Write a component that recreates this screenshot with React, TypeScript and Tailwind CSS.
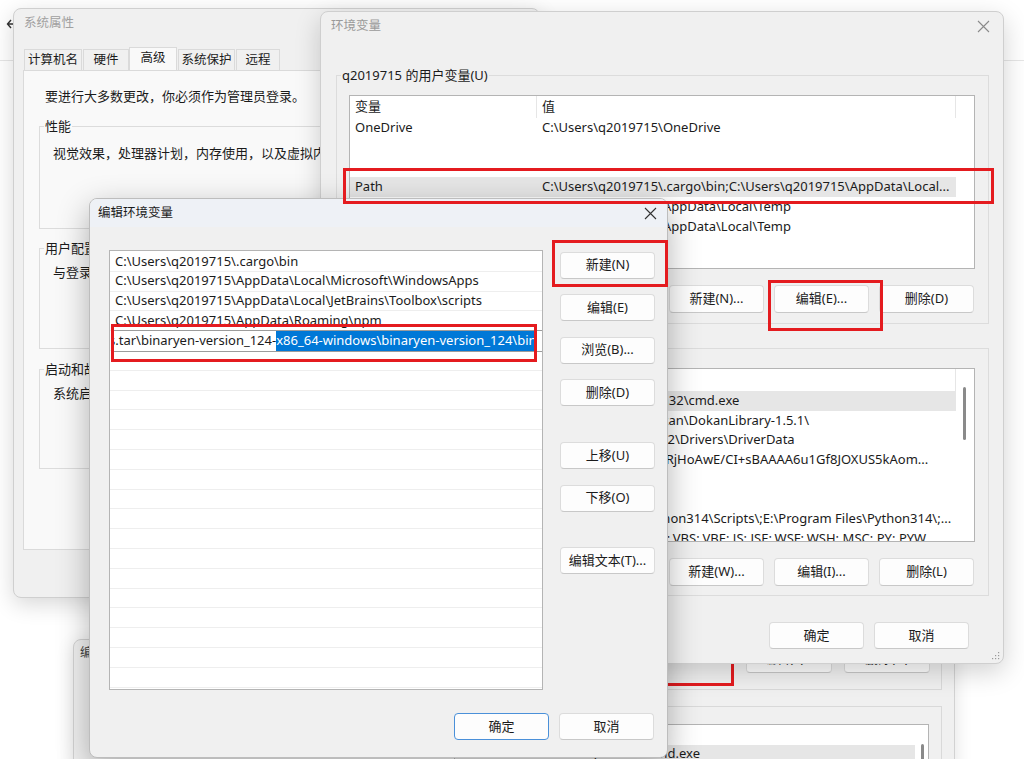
import React from 'react'

type BtnProps = {
  label: string
  className?: string
  focused?: boolean
}

function Btn({ label, className = '', focused = false }: BtnProps) {
  return (
    <div
      className={`flex w-[95px] shrink-0 items-center justify-center rounded-[4px] border bg-[#fdfdfd] text-[13px] text-[#1b1b1b] ${
        focused ? 'border-[#4a90d9]' : 'border-[#dcdcdc] border-b-[#c8c8c8]'
      } ${className}`}
    >
      {label}
    </div>
  )
}

function Group({ label, bg, className = '', children }: { label: string; bg: string; className?: string; children?: React.ReactNode }) {
  return (
    <div className={`relative border border-[#dcdcdc] ${className}`}>
      <span className={`absolute left-[4px] top-[-10px] px-[1px] leading-[18px] ${bg}`}>{label}</span>
      {children}
    </div>
  )
}

function CloseX({ color }: { color: string }) {
  return (
    <svg width="13" height="13" viewBox="0 0 13 13" className={color}>
      <path d="M1 1 L12 12 M12 1 L1 12" stroke="currentColor" strokeWidth="1.1" fill="none" />
    </svg>
  )
}

function RedBox({ className }: { className: string }) {
  return <div className={`absolute border-[3px] border-[#e41b1f] ${className}`} />
}

const userVars: [string, string, boolean?][] = [
  ['OneDrive', 'C:\\Users\\q2019715\\OneDrive'],
  ['', ''],
  ['', ''],
  ['Path', 'C:\\Users\\q2019715\\.cargo\\bin;C:\\Users\\q2019715\\AppData\\Local...', true],
  ['TEMP', 'C:\\Users\\q2019715\\AppData\\Local\\Temp'],
  ['TMP', 'C:\\Users\\q2019715\\AppData\\Local\\Temp'],
]

const sysVars: [string, string, boolean?][] = [
  ['ComSpec', 'C:\\WINDOWS\\system32\\cmd.exe', true],
  ['DokanLibrary1', 'C:\\Program Files\\Dokan\\DokanLibrary-1.5.1\\'],
  ['DriverData', 'C:\\Windows\\System32\\Drivers\\DriverData'],
  ['EFC_4416', 'AQAAANCMnd8BFdERjHoAwE/CI+sBAAAA6u1Gf8JOXUS5kAom...'],
  ['NUMBER_OF_PROCESSORS', '16'],
  ['OS', 'Windows_NT'],
  ['Path', 'E:\\Program Files\\Python314\\Scripts\\;E:\\Program Files\\Python314\\;...'],
  ['PATHEXT', '.COM;.EXE;.BAT;.CMD;.VBS;.VBE;.JS;.JSE;.WSF;.WSH;.MSC;.PY;.PYW'],
]

const pathItems = [
  'C:\\Users\\q2019715\\.cargo\\bin',
  'C:\\Users\\q2019715\\AppData\\Local\\Microsoft\\WindowsApps',
  'C:\\Users\\q2019715\\AppData\\Local\\JetBrains\\Toolbox\\scripts',
  'C:\\Users\\q2019715\\AppData\\Roaming\\npm',
]

function VarList({ rows, scroll, shifted }: { rows: [string, string, boolean?][]; scroll?: boolean; shifted?: boolean }) {
  return (
    <div className="relative h-[174px] overflow-hidden border border-[#b4b4b4] bg-white">
      <div className="flex h-[22px] items-center">
        <div className="flex h-full w-[187px] items-center border-r border-[#e6e6e6] pl-[5px]">变量</div>
        <div className="flex h-full w-[419px] items-center border-r border-[#e6e6e6] pl-[5px]">值</div>
      </div>
      {rows.map(([name, value, sel], i) => (
        <div key={i} className={`flex h-[19.7px] w-[606px] items-center whitespace-nowrap ${sel ? 'bg-[#e6e6e6]' : ''}`}>
          <div className="w-[187px] overflow-hidden pl-[5px]">{name}</div>
          <div className="w-[419px] overflow-hidden pl-[5px]">
            <span className={shifted ? 'ml-[-3px]' : ''}>{value}</span>
          </div>
        </div>
      ))}
      {scroll && <div className="absolute right-[8px] top-[18px] h-[53px] w-[3px] rounded-full bg-[#8a8a8a]" />}
    </div>
  )
}

export default function App() {
  return (
    <div className="relative h-[759px] w-[1024px] overflow-hidden bg-white font-['Noto_Sans','Noto_Sans_CJK_SC',sans-serif] text-[13px] text-[#1b1b1b]">
      {/* settings window behind everything */}
      <div className="absolute left-0 top-[60px] h-px w-full bg-[#e6e6e6]" />
      <svg className="absolute left-[6px] top-[18px]" width="10" height="12" viewBox="0 0 10 12">
        <path d="M8 6 H2 M5 2 L1.5 6 L5 10" stroke="#333" strokeWidth="1.4" fill="none" />
      </svg>

      {/* older dialog peeking out at the bottom */}
      <div className="absolute left-[73px] top-[639px] h-[140px] w-[882px] rounded-tl-[8px] border border-[#d2d2d2] bg-[#f0f0f0] shadow-[0_4px_18px_rgba(0,0,0,0.12)]">
        <div className="pl-[6px] pt-[4px] text-[12.5px] text-[#444]">编辑环境变量</div>
        <div className="absolute left-[487px] top-[-30px] h-[80px] w-[381px] border border-[#d9d9d9]" />
        <div className="absolute left-[487px] top-[66px] h-[100px] w-[381px] border border-[#d9d9d9]" />
        <Btn label="编辑(E)..." className="absolute left-[672px] top-[5px] h-[28px] !w-[86px]" />
        <Btn label="删除(D)" className="absolute left-[770px] top-[5px] h-[28px] !w-[86px]" />
        <div className="absolute left-[487px] top-[10px] h-[36px] w-[173px] border-[3px] border-[#e41b1f]" />
        <div className="absolute left-[380px] top-[84px] h-[60px] w-[475px] overflow-hidden border border-[#b4b4b4] bg-white">
          <div className="absolute left-0 top-[20px] h-[20px] w-[460px] bg-[#e6e6e6]" />
          <span className="absolute right-[228px] top-[19px] whitespace-nowrap">C:\WINDOWS\system32\cmd.exe</span>
          <div className="absolute left-[466px] top-[19px] h-[40px] w-[3px] rounded-full bg-[#8a8a8a]" />
        </div>
      </div>

      {/* 系统属性 */}
      <div className="absolute left-[13px] top-[8px] h-[590px] w-[527px] rounded-[8px] border border-[#cfcfcf] bg-[#f0f0f0] shadow-[0_6px_22px_rgba(0,0,0,0.16)]">
        <div className="flex h-[28px] items-center pl-[10px] text-[12.5px] text-[#a0a0a0]">系统属性</div>
        <div className="ml-[9px] mt-[11px] flex h-[22px] items-end text-[12.5px]">
          <div className="ml-[1px] flex h-[21px] w-[58px] items-center justify-center border border-b-0 border-[#dadada] bg-[#f0f0f0]">计算机名</div>
          <div className="ml-[1px] flex h-[21px] w-[46px] items-center justify-center border border-b-0 border-[#dadada] bg-[#f0f0f0]">硬件</div>
          <div className="relative z-10 flex h-[23px] w-[48px] items-center justify-center border border-b-0 border-[#dadada] bg-[#f9f9f9] pb-[2px]">高级</div>
          <div className="ml-[1px] flex h-[21px] w-[57px] items-center justify-center border border-b-0 border-[#dadada] bg-[#f0f0f0]">系统保护</div>
          <div className="ml-[1px] flex h-[21px] w-[44px] items-center justify-center border border-b-0 border-[#dadada] bg-[#f0f0f0]">远程</div>
        </div>
        <div className="ml-[9px] h-[480px] w-[510px] border border-[#dadada] bg-[#f9f9f9] pl-[21px] pt-[16px]">
          <div className="leading-[18px]">要进行大多数更改，你必须作为管理员登录。</div>
          <Group label="性能" bg="bg-[#f9f9f9]" className="ml-[-6px] mt-[21px] h-[103px] w-[470px] pl-[13px] pt-[17px]">
            <div className="leading-[18px]">视觉效果，处理器计划，内存使用，以及虚拟内存</div>
          </Group>
          <Group label="用户配置文件" bg="bg-[#f9f9f9]" className="ml-[-6px] mt-[19px] h-[101px] w-[470px] pl-[13px] pt-[14px]">
            <div className="leading-[18px]">与登录帐户相关的桌面设置</div>
          </Group>
          <Group label="启动和故障恢复" bg="bg-[#f9f9f9]" className="ml-[-6px] mt-[20px] h-[100px] w-[470px] pl-[13px] pt-[14px]">
            <div className="leading-[18px]">系统启动、系统故障和调试信息</div>
          </Group>
        </div>
      </div>

      {/* 环境变量 */}
      <div className="absolute left-[320px] top-[11px] h-[653px] w-[684px] rounded-[8px] border border-[#cfcfcf] bg-[#f0f0f0] shadow-[0_8px_26px_rgba(0,0,0,0.18)]">
        <div className="flex h-[28px] items-center justify-between pl-[10px] pr-[13px]">
          <span className="text-[12.5px] text-[#9a9a9a]">环境变量</span>
          <CloseX color="text-[#8a8a8a]" />
        </div>
        <Group label="q2019715 的用户变量(U)" bg="bg-[#f0f0f0]" className="ml-[15px] mr-[14px] mt-[35px] h-[249px] pl-[12px] pr-[13px] pt-[19px]">
          <VarList rows={userVars} />
          <div className="mt-[16px] flex h-[28px] justify-end gap-[10px] pr-[1px]">
            <Btn label="新建(N)..." />
            <Btn label="编辑(E)..." />
            <Btn label="删除(D)" />
          </div>
        </Group>
        <Group label="系统变量(S)" bg="bg-[#f0f0f0]" className="ml-[15px] mr-[14px] mt-[24px] h-[248px] pl-[12px] pr-[13px] pt-[19px]">
          <VarList rows={sysVars} scroll shifted />
          <div className="mt-[16px] flex h-[28px] justify-end gap-[10px] pr-[1px]">
            <Btn label="新建(W)..." />
            <Btn label="编辑(I)..." />
            <Btn label="删除(L)" />
          </div>
        </Group>
        <div className="mt-[26px] flex h-[27px] justify-end gap-[10px] pr-[34px]">
          <Btn label="确定" />
          <Btn label="取消" />
        </div>
        <svg className="absolute bottom-[3px] right-[3px]" width="8" height="8" viewBox="0 0 8 8">
          <g fill="#9a9a9a">
            <rect x="6" y="0" width="1.2" height="1.2" />
            <rect x="3" y="3" width="1.2" height="1.2" />
            <rect x="6" y="3" width="1.2" height="1.2" />
            <rect x="0" y="6" width="1.2" height="1.2" />
            <rect x="3" y="6" width="1.2" height="1.2" />
            <rect x="6" y="6" width="1.2" height="1.2" />
          </g>
        </svg>
      </div>

      {/* 编辑环境变量 */}
      <div className="absolute left-[89px] top-[198px] h-[560px] w-[579px] overflow-hidden rounded-[8px] border border-[#bdbdbd] bg-[#f0f0f0] shadow-[0_10px_32px_rgba(0,0,0,0.3)]">
        <div className="flex h-[28px] items-center justify-between bg-[#eef1f6] pl-[8px] pr-[10px]">
          <span className="text-[12.5px] text-[#1b1b1b]">编辑环境变量</span>
          <CloseX color="text-[#333]" />
        </div>
        <div className="mt-[23px] flex pl-[19px]">
          <div className="relative h-[440px] w-[434px] overflow-hidden border border-[#b4b4b4] bg-white">
            <div className="pt-[1px]">
              {Array.from({ length: 22 }).map((_, i) => (
                <div key={i} className="flex h-[19.8px] items-center whitespace-nowrap border-b border-[#eeeeee] pl-[5px]">
                  {pathItems[i] ?? ''}
                </div>
              ))}
            </div>
            <div className="absolute left-[3px] right-0 top-[79px] flex h-[22px] items-center overflow-hidden whitespace-nowrap border border-r-0 border-[#9c9c9c] bg-white">
              <span className="ml-[-5px]">s.tar\binaryen-version_124-</span>
              <span className="bg-[#0078d7] text-white">x86_64-windows\binaryen-version_124\bin</span>
            </div>
          </div>
          <div className="ml-[17px] flex flex-col pt-[1.5px]">
            <Btn label="新建(N)" className="h-[27px]" />
            <Btn label="编辑(E)" className="mt-[15.5px] h-[27px]" />
            <Btn label="浏览(B)..." className="mt-[15.5px] h-[27px]" />
            <Btn label="删除(D)" className="mt-[15.5px] h-[27px]" />
            <Btn label="上移(U)" className="mt-[36px] h-[27px]" />
            <Btn label="下移(O)" className="mt-[15.5px] h-[27px]" />
            <Btn label="编辑文本(T)..." className="mt-[35.5px] h-[27px]" />
          </div>
        </div>
        <div className="mt-[23px] flex h-[27px] justify-end gap-[10px] pr-[13px]">
          <Btn label="确定" focused />
          <Btn label="取消" />
        </div>
      </div>

      {/* annotation boxes */}
      <RedBox className="left-[343px] top-[168px] h-[36px] w-[651px]" />
      <RedBox className="left-[768px] top-[280px] h-[51px] w-[115px]" />
      <RedBox className="left-[552px] top-[240px] h-[47px] w-[116px]" />
      <RedBox className="left-[111px] top-[324px] h-[38px] w-[426px]" />
    </div>
  )
}
